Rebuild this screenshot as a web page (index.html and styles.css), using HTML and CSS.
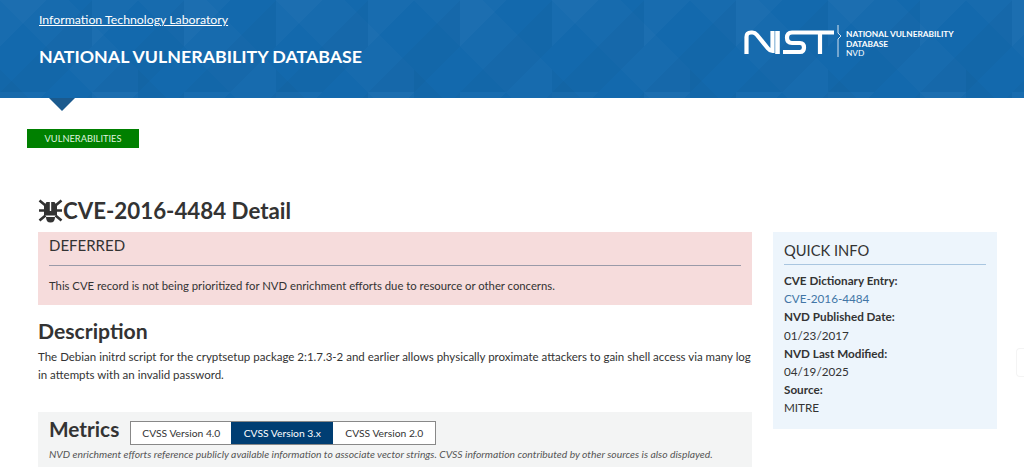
FILE: index.html
```html
<!DOCTYPE html>
<html lang="en">
<head>
  <meta charset="utf-8">
  <title>NVD - CVE-2016-4484</title>
  <link rel="stylesheet" href="styles.css">
</head>
<body>
<header class="banner">
  <div class="banner-left">
    <a class="itl" href="#">Information Technology Laboratory</a>
    <div class="nvd-name">NATIONAL VULNERABILITY DATABASE</div>
  </div>
  <div class="logo">
    <svg class="nist" width="91" height="25" viewBox="0 0 91 25">
      <path d="M2.500 24V7q0-4.500 4.500-4.500h1.500q2.500 0 4.500 2.500l11 13.500q2 2.500 4.500 2.500V1" fill="none" stroke="#fff" stroke-width="4.200"/>
      <path d="M33.500 1v23" fill="none" stroke="#fff" stroke-width="4.600"/>
      <path d="M39 22h17q4 0 4-4.500t-4-4.500h-8q-5 0-5-5.200t5-5.300h42M76 3v21" fill="none" stroke="#fff" stroke-width="4.200"/>
    </svg>
    <svg class="logo-bar" width="6" height="32" viewBox="0 0 6 32">
      <path d="M1 0v8l3 3-3 3v18" fill="none" stroke="#d5e3f0" stroke-width="1"/>
    </svg>
    <div class="logo-text">NATIONAL VULNERABILITY<br>DATABASE<br><span class="logo-thin">NVD</span></div>
  </div>
</header>
<div class="pointer"></div>

<nav class="crumbs"><a class="crumb" href="#">VULNERABILITIES</a></nav>

<main class="page">
  <div class="col-main">
    <h2 class="title">
      <svg class="bug" width="25" height="25" viewBox="0 0 25 25">
        <path d="M1.500 2.500l6 5M1 12.500h6M1.500 22.500l6-5M23.500 2.500l-6 5M24 12.500h-6M23.500 22.500l-6-5" fill="none" stroke="#333" stroke-width="2.600"/>
        <path d="M8.500 4h8l2.500 4v9.500H6V8z" fill="#333"/>
        <path d="M8 19h9q0 5.500-4.500 5.500T8 19z" fill="#333"/>
        <path d="M11.800 3.500h1.400V13h-1.400z" fill="#fff"/>
      </svg>CVE-2016-4484 Detail
    </h2>
    <section class="deferred">
      <h3 class="deferred-head">DEFERRED</h3>
      <p class="deferred-text">This CVE record is not being prioritized for NVD enrichment efforts due to resource or other concerns.</p>
    </section>
    <h3 class="desc-head">Description</h3>
    <p class="desc">The Debian initrd script for the cryptsetup package 2:1.7.3-2 and earlier allows physically proximate attackers to gain shell access via many log in attempts with an invalid password.</p>
    <section class="metrics">
      <div class="metrics-top">
        <h3 class="metrics-head">Metrics</h3>
        <div class="tabs">
          <button class="tab tab-first">CVSS Version 4.0</button>
          <button class="tab tab-on">CVSS Version 3.x</button>
          <button class="tab tab-last">CVSS Version 2.0</button>
        </div>
      </div>
      <p class="metrics-note">NVD enrichment efforts reference publicly available information to associate vector strings. CVSS information contributed by other sources is also displayed.</p>
    </section>
  </div>
  <aside class="quick">
    <h4 class="quick-head">QUICK INFO</h4>
    <dl class="quick-list">
      <dt>CVE Dictionary Entry:</dt>
      <dd><a href="#">CVE-2016-4484</a></dd>
      <dt>NVD Published Date:</dt>
      <dd>01/23/2017</dd>
      <dt>NVD Last Modified:</dt>
      <dd>04/19/2025</dd>
      <dt>Source:</dt>
      <dd>MITRE</dd>
    </dl>
  </aside>
</main>
<div class="edge-tab"></div>
</body>
</html>
```

FILE: styles.css
```css
html, body {
  margin: 0;
  padding: 0;
  height: 467px;
  overflow: hidden;
  background: #fff;
  color: #333;
  font-family: Lato, "Noto Sans", sans-serif;
}

.banner {
  height: 98px;
  box-sizing: border-box;
  padding: 11px 70px 0 39px;
  display: flex;
  justify-content: space-between;
  color: #fff;
  background-color: #1369ad;
  background-image:
    linear-gradient(135deg, rgba(255, 255, 255, .02) 25%, transparent 25%, transparent 50%, rgba(0, 0, 0, .025) 50%, rgba(0, 0, 0, .025) 75%, transparent 75%),
    linear-gradient(45deg, rgba(0, 0, 0, .025) 25%, transparent 25%, transparent 50%, rgba(255, 255, 255, .015) 50%, rgba(255, 255, 255, .015) 75%, transparent 75%);
  background-size: 92px 92px, 138px 138px;
}

.itl {
  color: #fff;
  font-size: 12.300px;
  line-height: 18px;
  display: block;
}

.nvd-name {
  margin-top: 16px;
  font-size: 17.800px;
  line-height: 22px;
  font-weight: 700;
}

.logo {
  display: flex;
  align-items: flex-start;
  padding-top: 19px;
}

.logo-bar {
  margin: -5px 3px 0 2px;
}

.logo-text {
  width: 108px;
  white-space: nowrap;
  font-size: 8.350px;
  line-height: 9.500px;
  font-weight: 700;
}

.logo-thin {
  font-weight: 400;
}

.pointer {
  width: 0;
  height: 0;
  margin-left: 49px;
  border-left: 13px solid transparent;
  border-right: 13px solid transparent;
  border-top: 13px solid #1b5a8e;
}

.crumbs {
  margin: 18px 0 0 27px;
  height: 20px;
}

.crumb {
  display: block;
  width: 112px;
  height: 19px;
  background: #008000;
  color: #dff3df;
  font-size: 9.300px;
  line-height: 19px;
  text-align: center;
  text-decoration: none;
}

.page {
  display: flex;
  align-items: flex-start;
  padding: 46px 27px 0 38px;
}

.col-main {
  width: 714px;
}

.title {
  margin: 0;
  height: 37px;
  box-sizing: border-box;
  padding-bottom: 6px;
  display: flex;
  align-items: center;
  font-size: 22.300px;
  line-height: 31px;
  font-weight: 700;
}

.bug {
  flex: none;
}

.deferred {
  background: #f6dcdc;
  height: 73px;
  box-sizing: border-box;
  padding: 0 11px;
}

.deferred-head {
  margin: 0;
  padding-top: 2px;
  height: 34px;
  box-sizing: border-box;
  border-bottom: 1px solid #9a9aa8;
  font-size: 15px;
  line-height: 22px;
  font-weight: 400;
}

.deferred-text {
  margin: 11px 0 0;
  font-size: 11.300px;
  line-height: 18px;
}

.desc-head {
  margin: 13px 0 0;
  font-size: 21.200px;
  line-height: 26px;
  font-weight: 700;
}

.desc {
  margin: 4px 0 0;
  font-size: 11.500px;
  line-height: 18px;
}

.metrics {
  margin-top: 28px;
  height: 60px;
  background: #f3f4f4;
  padding: 0 11px;
}

.metrics-top {
  display: flex;
  align-items: flex-end;
  gap: 11px;
  padding-top: 9px;
}

.metrics-head {
  margin: 0 0 8px;
  font-size: 20.800px;
  line-height: 16px;
}

.tabs {
  display: flex;
  border: 1px solid #888;
  background: #fff;
}

.tab {
  width: 102px;
  height: 22px;
  padding: 0;
  border: 0;
  background: #fff;
  color: #333;
  font-family: inherit;
  font-size: 10.300px;
}

.tab-first {
  width: 100px;
}

.tab-last {
  width: 102px;
}

.tab-on {
  background: #003e73;
  color: #fff;
}

.metrics-note {
  margin: 2px 0 0;
  font-size: 10.330px;
  line-height: 14px;
  font-style: italic;
  color: #555;
}

.quick {
  margin: 37px 0 0 21px;
  width: 224px;
  height: 197px;
  box-sizing: border-box;
  padding: 6px 11px 0;
  background: #edf5fc;
}

.quick-head {
  margin: 0;
  height: 26px;
  border-bottom: 1px solid #a9c6e0;
  font-size: 14.700px;
  line-height: 24px;
  font-weight: 400;
}

.quick-list {
  margin: 6px 0 0;
  font-size: 11.700px;
  line-height: 18.200px;
}

.quick-list dt {
  font-weight: 700;
}

.quick-list dd {
  margin: 0;
}

.quick-list a {
  color: #4276a6;
  text-decoration: none;
}

/* floating widget peeking in at the window edge */
.edge-tab {
  position: fixed;
  right: 0;
  top: 348px;
  width: 7px;
  height: 27px;
  border: 1px solid #f4f4f4;
  border-right: 0;
  border-radius: 4px 0 0 4px;
}
```
